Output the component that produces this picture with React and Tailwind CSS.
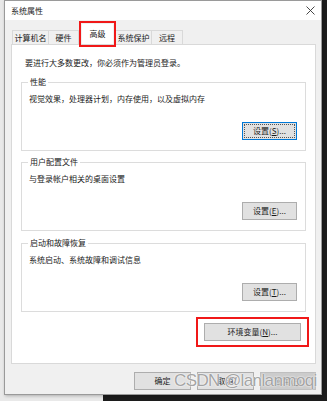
import React from 'react';

function Btn({ children, focused, disabled, className = '' }) {
  let look = 'border-[#adadad] bg-[#e1e1e1] text-[#1a1a1a]';
  if (focused) look = 'border-[#0078d7] bg-[#e1e1e1] text-[#1a1a1a]';
  if (disabled) look = 'border-[#bfbfbf] bg-[#cccccc] text-[#838383]';
  return (
    <div className={`flex h-[18px] items-center justify-center border ${look} ${className}`}>
      {focused ? (
        <div className="flex h-[14px] w-[51px] items-center justify-center border border-dotted border-[#555]">
          {children}
        </div>
      ) : (
        children
      )}
    </div>
  );
}

function Group({ title, desc, btn, focused }) {
  return (
    <fieldset className="mx-[9px] h-[74px] border border-[#dcdcdc] px-[5px] pb-[9px]">
      <legend className="ml-[1px] px-[2px] leading-[10px]">{title}</legend>
      <div className="mt-[7px] pl-[2px] leading-[10px]">{desc}</div>
      <div className="mt-[18px] flex justify-end pr-[3px]">
        <Btn focused={focused} className="w-[55px]">
          {btn}
        </Btn>
      </div>
    </fieldset>
  );
}

export default function App() {
  return (
    <div className="relative h-[401px] w-[327px] overflow-hidden bg-[#e9e9e9] font-['Noto_Sans_CJK_SC','Microsoft_YaHei',sans-serif] text-[8px] text-[#1a1a1a]">
      {/* desktop behind the window */}
      <div className="absolute right-0 top-0 h-full w-[5px] bg-[#1c1c1c]" />
      <div className="absolute bottom-0 left-[103px] right-0 h-[7px] bg-[#1c1c1c]" />

      <div className="absolute left-[4px] top-0 flex h-[395px] w-[318px] flex-col border border-[#9a9a9a] bg-[#f0f0f0] shadow-[1px_1px_3px_rgba(0,0,0,0.25)]">
        {/* title bar */}
        <div className="flex h-[19px] items-center justify-between bg-white pl-[6px] pr-[6px]">
          <span className="leading-[10px]">系统属性</span>
          <svg width="9" height="9" viewBox="0 0 9 9">
            <path d="M0.5 0.5 L8.5 8.5 M8.5 0.5 L0.5 8.5" stroke="#333" strokeWidth="0.9" />
          </svg>
        </div>

        {/* tabs */}
        <div className="relative z-10 ml-[7px] mt-[2px] flex h-[22px] items-end">
          <div className="flex h-[14px] w-[37px] items-center justify-center border border-b-0 border-[#d9d9d9]">计算机名</div>
          <div className="flex h-[14px] w-[30px] items-center justify-center border border-b-0 border-l-0 border-[#d9d9d9]">硬件</div>
          <div className="mb-[-3px] flex h-[26px] w-[37px] items-center justify-center border-2 border-[#f01818] p-px">
            <div className="flex h-full w-full items-center justify-center bg-white pb-[1px]">高级</div>
          </div>
          <div className="flex h-[14px] w-[36px] items-center justify-center border border-b-0 border-l-0 border-[#d9d9d9]">系统保护</div>
          <div className="flex h-[14px] w-[31px] items-center justify-center border border-b-0 border-l-0 border-[#d9d9d9]">远程</div>
        </div>

        {/* panel */}
        <div className="ml-[6px] flex h-[320px] w-[305px] flex-col border border-[#d9d9d9] bg-white">
          <div className="mb-[9px] mt-[13px] pl-[13px] leading-[10px]">要进行大多数更改，你必须作为管理员登录。</div>
          <Group
            title="性能"
            desc="视觉效果，处理器计划，内存使用，以及虚拟内存"
            focused
            btn={<span>设置(<u>S</u>)...</span>}
          />
          <div className="mt-[6px]">
            <Group title="用户配置文件" desc="与登录帐户相关的桌面设置" btn={<span>设置(<u>E</u>)...</span>} />
          </div>
          <div className="mt-[7px]">
            <Group title="启动和故障恢复" desc="系统启动、系统故障和调试信息" btn={<span>设置(<u>T</u>)...</span>} />
          </div>
          <div className="mt-[5px] flex justify-end pr-[6px]">
            <div className="border-2 border-[#f01818] px-[6px] py-[4px]">
              <Btn className="w-[97px]">
                <span>环境变量(<u>N</u>)...</span>
              </Btn>
            </div>
          </div>
        </div>

        {/* bottom buttons */}
        <div className="ml-[129px] mt-[8px] flex gap-[6px]">
          <Btn className="w-[57px]">确定</Btn>
          <Btn className="w-[57px]">取消</Btn>
          <Btn disabled className="w-[56px]">
            <span>应用(<u>A</u>)</span>
          </Btn>
        </div>
      </div>

      {/* watermark */}
      <div className="absolute left-[174px] top-[372px] font-['Liberation_Sans',Arial,sans-serif] text-[17px] leading-[17px] tracking-[-0.6px] text-[#8c8c8c]/80 [text-shadow:0_0_1px_#fff,0_0_2px_#fff]">
        CSDN @lanlanmoqi
      </div>
    </div>
  );
}
